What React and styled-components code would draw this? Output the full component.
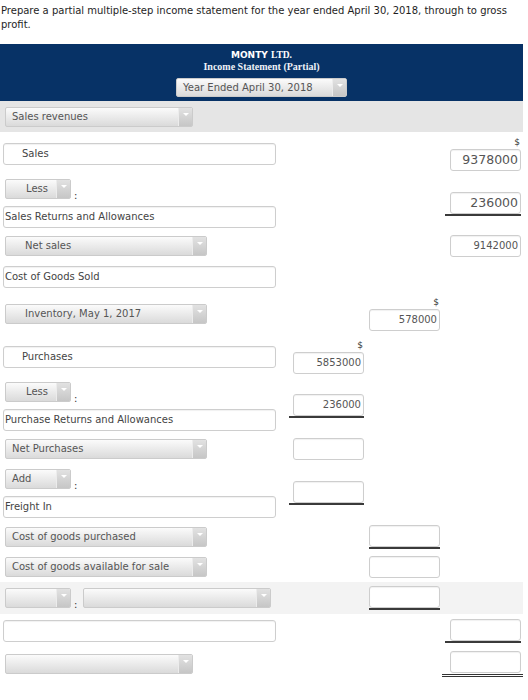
import React from 'react';
import styled, { createGlobalStyle } from 'styled-components';

const GlobalStyle = createGlobalStyle`
  html, body { margin: 0; padding: 0; background: #fff; }
  body { font-family: "DejaVu Sans", Verdana, sans-serif; font-size: 10px; color: #333; }
`;

const Page = styled.div`
  width: 528px;
`;

const Instructions = styled.p`
  margin: 0;
  padding: 4px 0 0 1px;
  font-size: 10px;
  line-height: 14px;
  color: #1e1e1e;
`;

const Statement = styled.div`
  width: 523px;
  margin-top: 12px;
`;

const Band = styled.div`
  height: 57px;
  box-sizing: border-box;
  background: #073266;
  display: flex;
  flex-direction: column;
  align-items: center;
  padding-top: 5px;
  color: #fff;
`;

const Company = styled.div`
  font-family: "DejaVu Sans", Verdana, sans-serif;
  font-weight: bold;
  font-size: 9px;
  line-height: 12px;
  span {
    font-family: "Liberation Serif", "Times New Roman", serif;
    font-size: 9.5px;
  }
`;

const Title = styled.div`
  font-family: "Liberation Serif", "Times New Roman", serif;
  font-weight: bold;
  font-size: 10px;
  line-height: 12px;
  color: #eef2f8;
  margin-bottom: 5px;
`;

const SelectBox = styled.div`
  display: flex;
  width: ${(p) => p.$w}px;
  height: ${(p) => p.$h || 20}px;
  box-sizing: border-box;
  border: 1px solid #cbcbcb;
  border-radius: 2px;
  background: linear-gradient(#fbfbfb, #dadada);
  margin-left: ${(p) => (p.$ml ?? 2)}px;
  overflow: hidden;
  flex-shrink: 0;
`;

const SelectText = styled.span`
  flex: 1;
  padding-left: ${(p) => p.$indent}px;
  font-size: 10px;
  color: #555;
  line-height: ${(p) => (p.$h || 20) - 2}px;
  white-space: nowrap;
  overflow: hidden;
`;

const SelectArrow = styled.span`
  width: 14px;
  background: linear-gradient(#e2e2e2, #c6c6c6);
  border-left: 1px solid #ececec;
  display: flex;
  justify-content: center;
  padding-top: 5px;
  box-sizing: border-box;
  &::after {
    content: '';
    width: 0;
    height: 0;
    border-left: 3px solid transparent;
    border-right: 3px solid transparent;
    border-top: 3px solid #fff;
  }
`;

const Select = ({ w, h, indent = 6, ml, children }) => (
  <SelectBox $w={w} $h={h} $ml={ml}>
    <SelectText $indent={indent} $h={h}>{children}</SelectText>
    <SelectArrow />
  </SelectBox>
);

const Row = styled.div`
  display: grid;
  grid-template-columns: 285px 81px 76px 81px;
  align-items: center;
  height: ${(p) => p.$h}px;
  background: ${(p) => p.$bg || 'transparent'};
`;

const LabelCell = styled.div`
  padding-left: 3px;
  display: flex;
  flex-direction: column;
  gap: 7px;
`;

const SelectLine = styled.div`
  display: flex;
  align-items: flex-end;
`;

const Colon = styled.span`
  margin-left: 3px;
  margin-bottom: -2px;
  font-size: 10px;
  line-height: 10px;
  color: #333;
  width: 4px;
`;

const TextField = styled.div`
  width: 273px;
  height: 22px;
  box-sizing: border-box;
  border: 1px solid #cecece;
  border-radius: 3px;
  background: #fff;
  box-shadow: inset 0 1px 1px rgba(0, 0, 0, 0.06);
  padding-left: ${(p) => p.$indent || 1}px;
  font-size: 10px;
  line-height: 20px;
  color: #444;
  white-space: nowrap;
`;

const AmountCell = styled.div`
  grid-column: ${(p) => p.$col};
  display: flex;
  flex-direction: column;
  align-items: flex-end;
`;

const Dollar = styled.div`
  font-size: 9px;
  line-height: 11px;
  color: #333;
  margin-right: 3px;
  margin-bottom: 1px;
`;

const Slot = styled.div`
  padding-left: ${(p) => p.$pl || 0}px;
  padding-right: ${(p) => p.$pr || 0}px;
  margin-right: ${(p) => (p.$mr ?? 2)}px;
  border-bottom: ${(p) =>
    p.$kind === 'double' ? '3px double #333' : p.$kind === 'single' ? '2px solid #3a3a3a' : 'none'};
  padding-bottom: ${(p) => (p.$kind === 'double' ? 1 : 0)}px;
`;

const AmountBox = styled.div`
  width: 71px;
  height: 22px;
  box-sizing: border-box;
  border: 1px solid #cecece;
  border-radius: 3px;
  background: #fff;
  box-shadow: inset 0 1px 1px rgba(0, 0, 0, 0.06);
  text-align: right;
  padding-right: 2px;
  font-size: ${(p) => p.$size || 10}px;
  line-height: 20px;
  color: #555;
  white-space: nowrap;
`;

const underlineLeft = { 2: 4, 3: 0, 4: 5 };

const Amount = ({ col, value, dollar, line, size }) => (
  <AmountCell $col={col}>
    {dollar && <Dollar>$</Dollar>}
    {line === 'double' ? (
      <Slot $kind="double" $pl={8} $pr={2} $mr={0}>
        <AmountBox $size={size}>{value}</AmountBox>
      </Slot>
    ) : (
      <Slot $kind={line ? 'single' : 'none'} $pl={line ? underlineLeft[col] : 0}>
        <AmountBox $size={size}>{value}</AmountBox>
      </Slot>
    )}
  </AmountCell>
);

export default function App() {
  return (
    <Page>
      <GlobalStyle />
      <Instructions>
        Prepare a partial multiple-step income statement for the year ended April 30, 2018, through to gross profit.
      </Instructions>
      <Statement>
        <Band>
          <Company>
            MONTY <span>LTD.</span>
          </Company>
          <Title>Income Statement (Partial)</Title>
          <Select w={171} h={19} ml={0} indent={6}>Year Ended April 30, 2018</Select>
        </Band>

        <Row $h={31} $bg="#e5e5e5">
          <LabelCell>
            <Select w={188}>Sales revenues</Select>
          </LabelCell>
        </Row>

        <Row $h={44}>
          <LabelCell>
            <TextField $indent={18}>Sales</TextField>
          </LabelCell>
          <Amount col={4} value="9378000" dollar size={12.5} />
        </Row>

        <Row $h={55}>
          <LabelCell>
            <SelectLine>
              <Select w={66} indent={20}>Less</Select>
              <Colon>:</Colon>
            </SelectLine>
            <TextField>Sales Returns and Allowances</TextField>
          </LabelCell>
          <Amount col={4} value="236000" line size={12.5} />
        </Row>

        <Row $h={30}>
          <LabelCell>
            <Select w={202} indent={19}>Net sales</Select>
          </LabelCell>
          <Amount col={4} value="9142000" />
        </Row>

        <Row $h={31}>
          <LabelCell>
            <TextField>Cost of Goods Sold</TextField>
          </LabelCell>
        </Row>

        <Row $h={43}>
          <LabelCell>
            <Select w={202} indent={19}>Inventory, May 1, 2017</Select>
          </LabelCell>
          <Amount col={3} value="578000" dollar />
        </Row>

        <Row $h={43}>
          <LabelCell>
            <TextField $indent={18}>Purchases</TextField>
          </LabelCell>
          <Amount col={2} value="5853000" dollar />
        </Row>

        <Row $h={56}>
          <LabelCell>
            <SelectLine>
              <Select w={66} indent={20}>Less</Select>
              <Colon>:</Colon>
            </SelectLine>
            <TextField>Purchase Returns and Allowances</TextField>
          </LabelCell>
          <Amount col={2} value="236000" line />
        </Row>

        <Row $h={30}>
          <LabelCell>
            <Select w={202}>Net Purchases</Select>
          </LabelCell>
          <Amount col={2} value="" />
        </Row>

        <Row $h={58}>
          <LabelCell>
            <SelectLine>
              <Select w={66}>Add</Select>
              <Colon>:</Colon>
            </SelectLine>
            <TextField>Freight In</TextField>
          </LabelCell>
          <Amount col={2} value="" line />
        </Row>

        <Row $h={30}>
          <LabelCell>
            <Select w={202}>Cost of goods purchased</Select>
          </LabelCell>
          <Amount col={3} value="" line />
        </Row>

        <Row $h={30}>
          <LabelCell>
            <Select w={202}>Cost of goods available for sale</Select>
          </LabelCell>
          <Amount col={3} value="" />
        </Row>

        <Row $h={32} $bg="#f3f3f3">
          <LabelCell>
            <SelectLine>
              <Select w={66}>{''}</Select>
              <Colon>:</Colon>
              <Select w={188} ml={5}>{''}</Select>
            </SelectLine>
          </LabelCell>
          <Amount col={3} value="" line />
        </Row>

        <Row $h={34}>
          <LabelCell>
            <TextField />
          </LabelCell>
          <Amount col={4} value="" line />
        </Row>

        <Row $h={32}>
          <LabelCell>
            <Select w={188}>{''}</Select>
          </LabelCell>
          <Amount col={4} value="" line="double" />
        </Row>
      </Statement>
    </Page>
  );
}
